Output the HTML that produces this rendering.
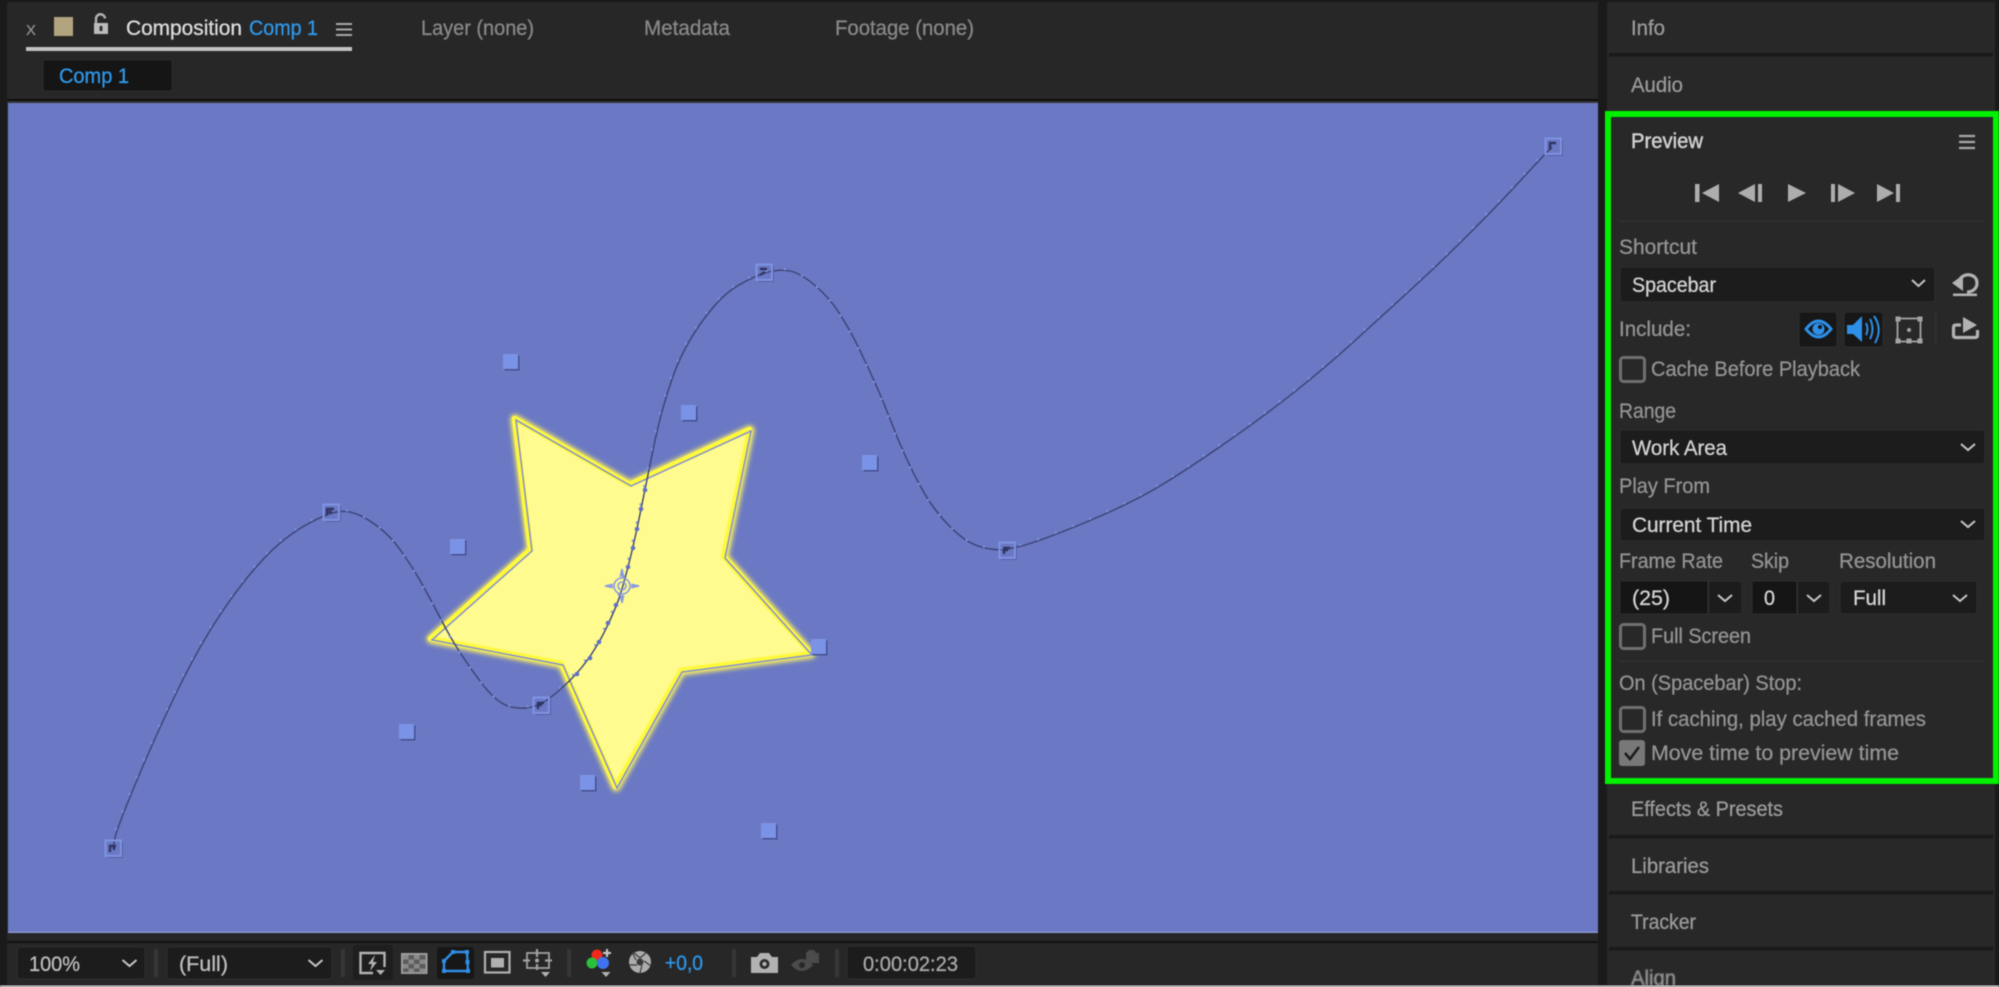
<!DOCTYPE html>
<html lang="en"><head><meta charset="utf-8"><title>Composition Comp 1</title>
<style>
html,body{margin:0;padding:0;background:#1a1a1a;width:1999px;height:987px;overflow:hidden}
svg{display:block;filter:blur(.55px)}
text{font-family:"Liberation Sans",Arial,sans-serif;font-size:21px;white-space:pre;stroke-width:.3px}
.l{fill:#939393;stroke:#939393}.f{fill:#d2d2d2;stroke:#d2d2d2}.h{fill:#9a9a9a;stroke:#9a9a9a}.b{fill:#2f97e8;stroke:#2f97e8}.t{fill:#888;stroke:#888}
.box{fill:#1c1c1c;stroke:#2f2f2f;stroke-width:1}
.chev{fill:none;stroke:#c4c4c4;stroke-width:2}
.cb{fill:none;stroke:#707070;stroke-width:3}
.div{fill:#191919}
.sep{fill:#363636}
.kf{fill:none;stroke:#7f93e4;stroke-width:2}
.kd{fill:none;stroke:#2f3563;stroke-width:2.4}
.ic{fill:none;stroke:#b2b2b2;stroke-width:2.4}
.ig{fill:#b2b2b2}
</style></head><body>
<svg xmlns="http://www.w3.org/2000/svg" width="1999" height="987" viewBox="0 0 1999 987">
<rect width="1999" height="987" fill="#1a1a1a"/>
<!-- left panel -->
<rect x="7" y="2" width="1591" height="983" fill="#272727"/>
<rect x="7" y="99" width="1591" height="2" fill="#0e0e0e"/>
<rect x="7" y="101" width="1591" height="2" fill="#343434"/>
<rect x="8" y="103" width="1590" height="830" fill="#6b79c4"/>
<rect x="8" y="931.500" width="1590" height="1.500" fill="#8a96d2"/>
<rect x="7" y="941" width="1591" height="2" fill="#121212"/>

<!-- tabs -->
<text x="26" y="35" fill="#8f8f8f" style="font-size:18px" textLength="10" lengthAdjust="spacingAndGlyphs">x</text>
<rect x="54" y="17" width="19" height="19" fill="#b3a480"/>
<path d="M96 24v-5a4.500 4.500 0 0 1 9-.5" class="ic"/>
<rect x="94" y="23" width="14" height="11" fill="#bcbcbc"/>
<rect x="99.500" y="26" width="3" height="5" fill="#333"/>
<text x="126" y="35" fill="#dcdcdc" stroke="#dcdcdc" textLength="116" lengthAdjust="spacingAndGlyphs">Composition</text>
<text x="249" y="35" class="b" textLength="69" lengthAdjust="spacingAndGlyphs">Comp 1</text>
<path d="M336 24h16M336 29.500h16M336 35h16" fill="none" stroke="#a8a8a8" stroke-width="2"/>
<rect x="26" y="47" width="326" height="4" fill="#c2c2c2"/>
<text x="421" y="35" class="t" textLength="113" lengthAdjust="spacingAndGlyphs">Layer (none)</text>
<text x="644" y="35" class="t" textLength="86" lengthAdjust="spacingAndGlyphs">Metadata</text>
<text x="835" y="35" class="t" textLength="139" lengthAdjust="spacingAndGlyphs">Footage (none)</text>
<rect x="43" y="60" width="129" height="31" rx="2" fill="#151515" stroke="#2c2c2c"/>
<text x="59" y="83" class="b" textLength="70" lengthAdjust="spacingAndGlyphs">Comp 1</text>

<!-- star -->
<defs><filter id="g" x="-10%" y="-10%" width="120%" height="120%"><feGaussianBlur stdDeviation="2.500"/></filter></defs>
<polygon points="516,420 631,486 751,431 725,558 812,655 682,672 617,788 563,665 432,640 532,551" transform="translate(-1,-1)" fill="#fff77a" stroke="#fff45a" stroke-width="9" stroke-linejoin="round" filter="url(#g)"/>
<polygon points="516,420 631,486 751,431 725,558 812,655 682,672 617,788 563,665 432,640 532,551" transform="translate(-1.500,-1.500)" fill="#fffb8e" stroke="#fff93c" stroke-width="5.500" stroke-linejoin="round"/>
<polygon points="520,427 631,492 745,439 720,559 805,651 680,667 617,778 567,660 442,637 537,553" fill="#fffb8e"/>
<polygon points="516,420 631,486 751,431 725,558 812,655 682,672 617,788 563,665 432,640 532,551" fill="none" stroke="#7c8ad8" stroke-width="1.400"/>

<!-- motion path -->
<g fill="none">
<path d="M113,848L115,838Q117,828 136,782.500Q155,737 176.500,692.500Q198,648 220,615Q242,582 262.500,560Q283,538 305,525.500Q327,513 340,511.500Q353,510 370,521Q387,532 398.500,547.500Q410,563 420,580.500Q430,598 440,617.500Q450,637 460,652.500Q470,668 481.500,683Q493,698 502.500,703.500Q512,709 526,708Q540,707 558.500,691Q577,675 588.500,658.500Q600,642 608.500,623.500Q617,605 620,595.500Q623,586 628,567Q633,548 639,519Q645,490 651,460Q657,430 662,411.500Q667,393 673.500,375Q680,357 690,340Q700,323 713,307.500Q726,292 741.500,283.500Q757,275 768.500,272Q780,269 790,271Q800,273 814.500,285Q829,297 839.500,313.500Q850,330 859,348.500Q868,367 876,385Q884,403 891,421.500Q898,440 906.500,458.500Q915,477 924.500,493.500Q934,510 947.500,524Q961,538 971,543Q981,548 994,549.500Q1007,551 1031.500,543Q1056,535 1093.500,519Q1131,503 1156.500,488Q1182,473 1222.500,445Q1263,417 1294.500,392Q1326,367 1354.500,341Q1383,315 1411.500,289Q1440,263 1469,234Q1498,205 1521,180Q1544,155 1552,147" stroke="#3b4272" stroke-width="1.400"/>
<path d="M113,848L115,838Q117,828 136,782.500Q155,737 176.500,692.500Q198,648 220,615Q242,582 262.500,560Q283,538 305,525.500Q327,513 340,511.500Q353,510 370,521Q387,532 398.500,547.500Q410,563 420,580.500Q430,598 440,617.500Q450,637 460,652.500Q470,668 481.500,683Q493,698 502.500,703.500Q512,709 526,708Q540,707 558.500,691Q577,675 588.500,658.500Q600,642 608.500,623.500Q617,605 620,595.500Q623,586 628,567Q633,548 639,519Q645,490 651,460Q657,430 662,411.500Q667,393 673.500,375Q680,357 690,340Q700,323 713,307.500Q726,292 741.500,283.500Q757,275 768.500,272Q780,269 790,271Q800,273 814.500,285Q829,297 839.500,313.500Q850,330 859,348.500Q868,367 876,385Q884,403 891,421.500Q898,440 906.500,458.500Q915,477 924.500,493.500Q934,510 947.500,524Q961,538 971,543Q981,548 994,549.500Q1007,551 1031.500,543Q1056,535 1093.500,519Q1131,503 1156.500,488Q1182,473 1222.500,445Q1263,417 1294.500,392Q1326,367 1354.500,341Q1383,315 1411.500,289Q1440,263 1469,234Q1498,205 1521,180Q1544,155 1552,147" stroke="#7d92e2" stroke-width="2.400" stroke-linecap="round" stroke-dasharray="0 18.600" transform="translate(-1.200,-1.200)"/>
</g>
<g fill="#6070c8">
<circle cx="645" cy="490" r="2.300"/><circle cx="641" cy="509" r="2.300"/><circle cx="637" cy="529" r="2.300"/><circle cx="633" cy="548" r="2.300"/><circle cx="628" cy="567" r="2.300"/><circle cx="616" cy="605" r="2.300"/><circle cx="608" cy="623" r="2.300"/><circle cx="599" cy="642" r="2.300"/><circle cx="590" cy="658" r="2.300"/><circle cx="577" cy="674" r="2.300"/>
</g>
<!-- anchor point -->
<g fill="none" stroke="#8b9be2" stroke-width="1.600">
<circle cx="622" cy="586" r="8"/><circle cx="622" cy="586" r="4"/>
<path d="M605 586l7-1.500v3zM639 586l-7-1.500v3zM622 569l-1.500 7h3zM622 603l-1.500-7h3z" fill="#8b9be2"/>
</g>

<!-- tangent handles -->
<g fill="#44508f">
<rect x="504.500" y="355.500" width="15" height="15"/><rect x="682.500" y="406.500" width="15" height="15"/><rect x="863.500" y="456.500" width="15" height="15"/><rect x="451.500" y="540.500" width="15" height="15"/><rect x="812.500" y="640.500" width="15" height="15"/><rect x="581.500" y="776.500" width="15" height="15"/><rect x="400.500" y="725.500" width="15" height="15"/><rect x="762.500" y="824.500" width="15" height="15"/>
</g>
<g fill="#7b93e6">
<rect x="503" y="354" width="15" height="15"/><rect x="681" y="405" width="15" height="15"/><rect x="862" y="455" width="15" height="15"/><rect x="450" y="539" width="15" height="15"/><rect x="811" y="639" width="15" height="15"/><rect x="580" y="775" width="15" height="15"/><rect x="399" y="724" width="15" height="15"/><rect x="761" y="823" width="15" height="15"/>
</g>
<!-- keyframes -->
<g transform="translate(113,848)"><path d="M-6 9h15v-15" fill="none" stroke="#4a5590" stroke-width="1.500"/><rect x="-7.500" y="-7.500" width="15.500" height="15.500" class="kf"/><path d="M-3 4v-6h6M1-2v4" class="kd"/></g>
<g transform="translate(331,512)"><path d="M-6 9h15v-15" fill="none" stroke="#4a5590" stroke-width="1.500"/><rect x="-7.500" y="-7.500" width="15.500" height="15.500" class="kf"/><path d="M-4 3v-6h7M-4 0h5" class="kd"/></g>
<g transform="translate(541,705)"><path d="M-6 9h15v-15" fill="none" stroke="#4a5590" stroke-width="1.500"/><rect x="-7.500" y="-7.500" width="15.500" height="15.500" class="kf"/><path d="M-3 4v-6h6M-3 0h4" class="kd"/></g>
<g transform="translate(764,272)"><path d="M-6 9h15v-15" fill="none" stroke="#4a5590" stroke-width="1.500"/><rect x="-7.500" y="-7.500" width="15.500" height="15.500" class="kf"/><path d="M-4-3h7M-4 3l5-3" class="kd"/></g>
<g transform="translate(1007,550)"><path d="M-6 9h15v-15" fill="none" stroke="#4a5590" stroke-width="1.500"/><rect x="-7.500" y="-7.500" width="15.500" height="15.500" class="kf"/><path d="M-3 4v-6h6M-3 0h4" class="kd"/></g>
<g transform="translate(1553,146)"><path d="M-6 9h15v-15" fill="none" stroke="#4a5590" stroke-width="1.500"/><rect x="-7.500" y="-7.500" width="15.500" height="15.500" class="kf"/><path d="M-3 4v-7h6" class="kd"/></g>

<!-- bottom toolbar -->
<rect x="17" y="947" width="128" height="32" rx="3" class="box"/>
<text x="29" y="971" fill="#bdbdbd" stroke="#bdbdbd" textLength="51" lengthAdjust="spacingAndGlyphs">100%</text>
<path d="M122.500 960l7 6 7-6" class="chev"/>
<rect x="154" y="949" width="4" height="28" class="sep"/>
<rect x="167" y="947" width="165" height="32" rx="3" class="box"/>
<text x="179" y="971" fill="#bdbdbd" stroke="#bdbdbd" textLength="49" lengthAdjust="spacingAndGlyphs">(Full)</text>
<path d="M308.500 960l7 6 7-6" class="chev"/>
<rect x="341" y="949" width="4" height="28" class="sep"/>

<rect x="353" y="945" width="40" height="35" rx="3" fill="#1e1e1e"/>
<path d="M373 973h-12.500v-20h24v14" class="ic"/>
<path d="M375 955l-7 9h4l-2 7 7-9h-4z" fill="#b2b2b2"/>
<path d="M376 970h9l-4.500 5z" fill="#b2b2b2"/>

<rect x="402" y="954" width="24.500" height="19" fill="#5c5c5c" stroke="#9c9c9c" stroke-width="2"/>
<g fill="#8a8a8a"><rect x="403" y="955" width="5.500" height="4.500"/><rect x="414" y="955" width="5.500" height="4.500"/><rect x="408.500" y="959.500" width="5.500" height="4.500"/><rect x="419.500" y="959.500" width="6" height="4.500"/><rect x="403" y="964" width="5.500" height="4.500"/><rect x="414" y="964" width="5.500" height="4.500"/><rect x="408.500" y="968.500" width="5.500" height="4"/><rect x="419.500" y="968.500" width="6" height="4"/></g>

<rect x="437" y="947" width="37" height="32" rx="3" fill="#171717"/>
<path d="M444 971V961L453 952H467L468 971Z" fill="none" stroke="#2f8ee6" stroke-width="2.400"/>
<g fill="#2f8ee6"><rect x="442" y="969" width="4" height="4"/><rect x="466" y="969" width="4" height="4"/><rect x="442" y="959" width="4" height="4"/><rect x="451" y="950" width="4" height="4"/><rect x="465" y="950" width="4" height="4"/><rect x="465.500" y="960" width="4" height="4"/></g>

<rect x="485" y="952" width="24.500" height="20.500" fill="none" stroke="#b0b0b0" stroke-width="2.200"/>
<rect x="491" y="958" width="13" height="9.500" fill="#b0b0b0"/>

<rect x="527" y="953" width="22" height="15" fill="none" stroke="#a0a0a0" stroke-width="1.800"/>
<path d="M537 949v8M537 964v6M523 960.500h7M545 960.500h7" stroke="#a0a0a0" stroke-width="2.200" fill="none"/>
<circle cx="537" cy="960.500" r="2" fill="#a6a6a6"/>
<path d="M541 972h9l-4.500 5z" fill="#b2b2b2"/>

<rect x="567" y="949" width="4" height="28" class="sep"/>
<circle cx="597" cy="955" r="5.500" fill="#f0291c"/>
<circle cx="592" cy="963" r="5.500" fill="#29c23a"/>
<circle cx="603" cy="963" r="6" fill="#3f73ef"/>
<path d="M607 949v8M603 953h8" stroke="#c4c4c4" stroke-width="2.200"/>
<path d="M601.500 972h9l-4.500 5z" fill="#b2b2b2"/>

<circle cx="640" cy="962" r="11" fill="#adadad"/>
<g stroke="#3a3a3a" stroke-width="1.200" fill="none"><path d="M640 958L647 952M644 961L651 966M642 965L640 973M637 965L629 965M636 960L632 952M640 958L633 952"/></g>
<circle cx="640" cy="962" r="3.500" fill="#3a3a3a"/>
<text x="665" y="970" class="b" textLength="38" lengthAdjust="spacingAndGlyphs">+0,0</text>

<rect x="732" y="949" width="4" height="28" class="sep"/>
<path d="M751 957h6l3-4h9l3 4h6v16h-27z" fill="#b2b2b2"/>
<circle cx="764.500" cy="964" r="5" fill="#2c2c2c"/><circle cx="764.500" cy="964" r="2.200" fill="#b2b2b2"/>
<g fill="#4b4b4b">
<path d="M806 953l3-3h5l2 3h3v10h-8a14 14 0 0 0-5-3z"/>
<path d="M791 965q11-12 22 0q-11 12-22 0z"/>
</g>
<circle cx="802" cy="965" r="3" fill="#272727"/>
<rect x="835" y="949" width="4" height="28" class="sep"/>
<rect x="847" y="946" width="129" height="33" rx="3" class="box"/>
<text x="863" y="971" fill="#a8a8a8" stroke="#a8a8a8" textLength="95" lengthAdjust="spacingAndGlyphs">0:00:02:23</text>

<!-- right column -->
<rect x="1607" y="2" width="388" height="983" fill="#282828"/>
<rect x="1609" y="53" width="384" height="3.500" class="div"/>
<rect x="1609" y="835" width="384" height="3.500" class="div"/>
<rect x="1609" y="891" width="384" height="3.500" class="div"/>
<rect x="1609" y="947" width="384" height="3.500" class="div"/>
<text x="1631" y="35" class="h" textLength="34" lengthAdjust="spacingAndGlyphs">Info</text>
<text x="1631" y="92" class="h" textLength="52" lengthAdjust="spacingAndGlyphs">Audio</text>
<text x="1631" y="816" class="h" textLength="152" lengthAdjust="spacingAndGlyphs">Effects &amp; Presets</text>
<text x="1631" y="873" class="h" textLength="78" lengthAdjust="spacingAndGlyphs">Libraries</text>
<text x="1631" y="929" class="h" textLength="65" lengthAdjust="spacingAndGlyphs">Tracker</text>
<svg x="1607" y="950" width="392" height="35"><text x="24" y="35" class="h" textLength="45" lengthAdjust="spacingAndGlyphs">Align</text></svg>

<!-- preview panel -->
<rect x="1608" y="114" width="388" height="667" fill="#282828" stroke="#00f000" stroke-width="6"/>
<text x="1631" y="148" fill="#d0d0d0" stroke="#d0d0d0" style="stroke-width:.5px" textLength="72" lengthAdjust="spacingAndGlyphs">Preview</text>
<path d="M1959 136h16M1959 142h16M1959 148h16" stroke="#a8a8a8" stroke-width="2.200" fill="none"/>
<g fill="#adadad">
<rect x="1695" y="184" width="4.500" height="18"/><polygon points="1702,193 1719,184 1719,202"/>
<polygon points="1738,193 1755,184 1755,202"/><rect x="1758" y="184" width="4" height="18"/>
<polygon points="1788,184 1806,193 1788,202"/>
<rect x="1831" y="184" width="4" height="18"/><polygon points="1838,184 1855,193 1838,202"/>
<polygon points="1877,184 1894,193 1877,202"/><rect x="1896" y="184" width="4" height="18"/>
</g>
<rect x="1619" y="220.500" width="366" height="1.500" fill="#303030"/>
<text x="1619" y="254" class="l" textLength="78" lengthAdjust="spacingAndGlyphs">Shortcut</text>
<rect x="1620" y="267" width="315" height="35" rx="3" class="box"/>
<text x="1632" y="292" class="f" textLength="84" lengthAdjust="spacingAndGlyphs">Spacebar</text>
<path d="M1912 280l6.500 6 6.500-6" class="chev"/>
<path d="M1960 279C1965 272 1977 274 1977 283C1977 289 1972 292 1967 292" fill="none" stroke="#b2b2b2" stroke-width="3.200"/>
<polygon points="1952,283 1963,275 1963,291" fill="#b2b2b2"/>
<rect x="1953" y="293.500" width="24" height="2.600" fill="#b2b2b2"/>

<text x="1619" y="336" class="l" textLength="72" lengthAdjust="spacingAndGlyphs">Include:</text>
<rect x="1799" y="312" width="38" height="35" rx="3" fill="#171717" stroke="#2d2d2d"/>
<path d="M1806 329Q1818.500 313 1831 329Q1818.500 345 1806 329Z" fill="none" stroke="#2d8fe8" stroke-width="3"/>
<circle cx="1818.500" cy="329" r="6" fill="#2d8fe8"/><circle cx="1820" cy="327" r="2" fill="#171717"/>
<rect x="1844" y="312" width="39" height="35" rx="3" fill="#171717" stroke="#2d2d2d"/>
<polygon points="1847,325 1853,325 1862,316 1862,342 1853,334 1847,334" fill="#2d8fe8"/>
<path d="M1866 323Q1869 329 1866 335M1870 319Q1875 329 1870 339M1874 316Q1883 329 1875 343" fill="none" stroke="#2d8fe8" stroke-width="2"/>
<rect x="1897.500" y="318.500" width="23" height="23" fill="none" stroke="#a4a4a4" stroke-width="1.800"/>
<g fill="#a4a4a4"><rect x="1895.500" y="316.500" width="5" height="5"/><rect x="1917.500" y="316.500" width="5" height="5"/><rect x="1895.500" y="338.500" width="5" height="5"/><rect x="1917.500" y="338.500" width="5" height="5"/><rect x="1906.500" y="338.500" width="5" height="5"/><circle cx="1909" cy="330" r="2"/></g>
<rect x="1935" y="312" width="1.500" height="33" fill="#333"/>
<path d="M1961 325H1956Q1953.500 325 1953.500 327.500V335Q1953.500 337.500 1956 337.500H1975Q1977.500 337.500 1977.500 335V330" fill="none" stroke="#b2b2b2" stroke-width="3.200"/>
<polygon points="1963,317 1977,325 1963,333" fill="#b2b2b2"/>

<rect x="1620.500" y="357.500" width="24" height="24" rx="3" class="cb"/>
<text x="1651" y="376" class="l" textLength="209" lengthAdjust="spacingAndGlyphs">Cache Before Playback</text>

<text x="1619" y="418" class="l" textLength="57" lengthAdjust="spacingAndGlyphs">Range</text>
<rect x="1620" y="430" width="365" height="34" rx="3" class="box"/>
<text x="1632" y="455" class="f" textLength="95" lengthAdjust="spacingAndGlyphs">Work Area</text>
<path d="M1961 444l7 6 7-6" class="chev"/>

<text x="1619" y="493" class="l" textLength="91" lengthAdjust="spacingAndGlyphs">Play From</text>
<rect x="1620" y="508" width="365" height="33" rx="3" class="box"/>
<text x="1632" y="532" class="f" textLength="120" lengthAdjust="spacingAndGlyphs">Current Time</text>
<path d="M1961 521l7 6 7-6" class="chev"/>

<text x="1619" y="568" class="l" textLength="104" lengthAdjust="spacingAndGlyphs">Frame Rate</text>
<text x="1751" y="568" class="l" textLength="38" lengthAdjust="spacingAndGlyphs">Skip</text>
<text x="1839" y="568" class="l" textLength="97" lengthAdjust="spacingAndGlyphs">Resolution</text>

<rect x="1620" y="581" width="122" height="33" rx="3" class="box"/>
<rect x="1620.500" y="581.500" width="87" height="32" fill="#151515"/>
<rect x="1707.500" y="581" width="1.500" height="33" fill="#333"/>
<text x="1632" y="605" class="f" textLength="38" lengthAdjust="spacingAndGlyphs">(25)</text>
<path d="M1718 595l7 6 7-6" class="chev"/>
<rect x="1752" y="581" width="78" height="33" rx="3" class="box"/>
<rect x="1752.500" y="581.500" width="44" height="32" fill="#151515"/>
<rect x="1796.500" y="581" width="1.500" height="33" fill="#333"/>
<text x="1764" y="605" class="f" textLength="11" lengthAdjust="spacingAndGlyphs">0</text>
<path d="M1807 595l7 6 7-6" class="chev"/>
<rect x="1840" y="581" width="137" height="33" rx="3" class="box"/>
<text x="1853" y="605" class="f" textLength="33" lengthAdjust="spacingAndGlyphs">Full</text>
<path d="M1953 595l7 6 7-6" class="chev"/>

<rect x="1620.500" y="624.500" width="24" height="24" rx="3" class="cb"/>
<text x="1651" y="643" class="l" textLength="100" lengthAdjust="spacingAndGlyphs">Full Screen</text>

<rect x="1619" y="660.500" width="366" height="1.500" fill="#303030"/>
<text x="1619" y="690" class="l" textLength="183" lengthAdjust="spacingAndGlyphs">On (Spacebar) Stop:</text>
<rect x="1620.500" y="707.500" width="24" height="24" rx="3" class="cb"/>
<text x="1651" y="726" class="l" textLength="275" lengthAdjust="spacingAndGlyphs">If caching, play cached frames</text>
<rect x="1619" y="740" width="26" height="26" rx="3" fill="#787878"/>
<path d="M1625 753l5 6 9-12" fill="none" stroke="#1c1c1c" stroke-width="2.600"/>
<text x="1651" y="760" class="l" textLength="248" lengthAdjust="spacingAndGlyphs">Move time to preview time</text>

<rect x="0" y="985.500" width="1999" height="1.500" fill="#e4e4e4"/>
</svg>
</body></html>
